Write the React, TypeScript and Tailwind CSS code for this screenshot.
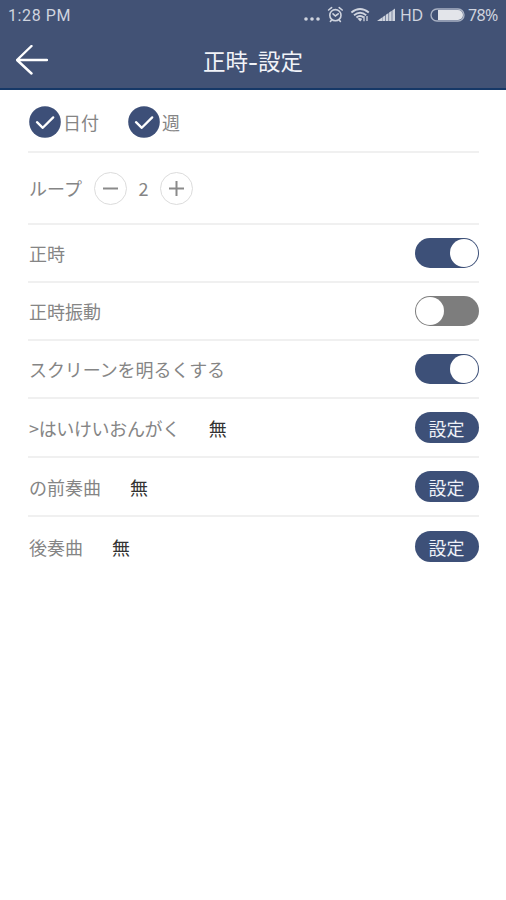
import { useState } from "react";
import type { ReactNode } from "react";
import clsx from "clsx";

/** Rows that carry an on/off switch. */
const SWITCHES = [
  { id: "hour", label: "正時", on: true },
  { id: "vibrate", label: "正時振動", on: false },
  { id: "screen", label: "スクリーンを明るくする", on: true },
];

const SOUNDS = [
  { id: "bgm", label: ">はいけいおんがく", value: "無" },
  { id: "prelude", label: "の前奏曲", value: "無" },
  { id: "postlude", label: "後奏曲", value: "無" },
];

function StatusBar() {
  return (
    <div className="flex h-[30px] items-center pl-2 pr-[7px] text-[#cfd4df]">
      <span className="mt-0.5 font-['Roboto',sans-serif] text-base leading-none tracking-[0.6px]">1:28 PM</span>
      <svg width="98" height="20" viewBox="0 0 98 20" className="ml-auto shrink-0" fill="none" stroke="currentColor">
        {/* more */}
        <g fill="currentColor" stroke="none">
          <circle cx="6" cy="14" r="1.8" />
          <circle cx="12" cy="14" r="1.8" />
          <circle cx="18" cy="14" r="1.8" />
        </g>
        {/* alarm */}
        <g strokeWidth="1.6" strokeLinecap="round">
          <circle cx="35.4" cy="10.2" r="5.6" />
          <path d="M28.6 5l3-2.4M42.2 5l-3-2.4M33 8.8l2.4 2.2 2.8-2.2M31.4 15.2l-1 1.2M39.4 15.2l1 1.2" />
        </g>
        {/* wifi */}
        <g strokeWidth="1.9">
          <path d="M51.4 7.6q8.6-7 17.4 0" />
          <path d="M54 10.2q6.1-5 12.2 0" />
          <path d="M56.4 12.6q3.7-3 7.4 0" />
          <path d="M57.4 13.6l2.8 2.8 1.6-1.6v-1.2q-2.2-1.4-4.4 0z" fill="currentColor" stroke="none" />
          <path d="M64 16.2v-5M67 11v5" strokeWidth="1.3" />
        </g>
        {/* signal */}
        <path
          d="M77 16l5.4-3.8V16zM82.7 12l2.6-1.8V16h-2.6zM85.9 9.8l2.6-1.8V16h-2.6zM89.1 7.6l2.6-1.8V16h-2.6zM92.3 5.4l2.7-1.9V16h-2.7z"
          fill="currentColor"
          stroke="none"
        />
      </svg>
      <span className="ml-[2px] w-[25px] whitespace-nowrap font-['Noto_Sans',sans-serif] text-base leading-none tracking-[-0.4px]">HD</span>
      {/* battery */}
      <svg width="35" height="14" viewBox="0 0 35 14" className="ml-[5px] shrink-0" fill="none">
        <rect x="1" y="1" width="33" height="12" rx="6" stroke="#a9b1c3" strokeWidth="1.4" />
        <path d="M8 2h20a5 5 0 0 1 0 10H8z" fill="#e3e5ea" />
      </svg>
      <span className="ml-[3px] w-[31px] whitespace-nowrap font-['Noto_Sans',sans-serif] text-base leading-none tracking-[-0.7px]">78%</span>
    </div>
  );
}

function BackArrow() {
  return (
    <svg width="32" height="30" viewBox="0 0 32 30" fill="none" stroke="#fff" strokeWidth="2.4" strokeLinecap="round" strokeLinejoin="round">
      <path d="M31 15H1M15.5 1L1 15l14.5 13.5" />
    </svg>
  );
}

function Row({ className, children }: { className?: string; children: ReactNode }) {
  return <div className={clsx("flex items-center border-[#f0f0f0] pl-px", className)}>{children}</div>;
}

function Check({ label }: { label: string }) {
  return (
    <label className="flex items-center">
      <svg width="32" height="32" viewBox="0 0 32 32" fill="none">
        <circle cx="16" cy="16" r="15.8" fill="#3d4f78" />
        <path d="M8 16.2l5.8 5.6 10.4-10.4" stroke="#fff" strokeWidth="2.3" strokeLinecap="round" strokeLinejoin="round" />
      </svg>
      <span className="ml-0.5">{label}</span>
    </label>
  );
}

function StepButton({ plus, onClick }: { plus?: boolean; onClick: () => void }) {
  return (
    <button onClick={onClick} className="size-[33px] rounded-full border border-[#dcdcdc]">
      <svg viewBox="0 0 31 31" fill="none" stroke="#8a8a8a" strokeWidth="2">
        <path d={plus ? "M8 15.5h15M15.5 8v15" : "M8 15.5h15"} />
      </svg>
    </button>
  );
}

function Toggle({ on, onClick }: { on: boolean; onClick: () => void }) {
  return (
    <button
      onClick={onClick}
      className={clsx(
        "ml-auto flex h-[30px] w-[64px] items-center rounded-full px-px",
        on ? "justify-end bg-[#3d5078]" : "justify-start bg-[#7d7d7d]"
      )}
    >
      <span className="size-7 rounded-full bg-white" />
    </button>
  );
}

export default function App() {
  const [loop, setLoop] = useState(2);
  const [switches, setSwitches] = useState(SWITCHES);

  const toggle = (id: string) => setSwitches(switches.map((s) => (s.id === id ? { ...s, on: !s.on } : s)));

  return (
    <div className="min-h-screen bg-white font-['Noto_Sans_CJK_JP',sans-serif] text-lg leading-none text-[#858585]">
      <header className="h-[90px] border-b-2 border-[#163867] bg-[#425275]">
        <StatusBar />
        <div className="grid h-[60px] grid-cols-[32px_1fr_32px] items-center px-4">
          <BackArrow />
          <h1 className="flex items-center justify-center text-[22.5px] text-[#f1f3f8]">
            正時<span className="inline-block scale-x-125 px-px font-medium">-</span>設定
          </h1>
        </div>
      </header>

      <main className="pl-7 pr-[27px]">
        <Row className="h-[63px] gap-[29px] border-b-2 pt-0.5">
          <Check label="日付" />
          <Check label="週" />
        </Row>
        <Row className="h-[72px] border-b-2">
          <span className="mr-3">ループ</span>
          <StepButton onClick={() => setLoop(Math.max(0, loop - 1))} />
          <span className="w-[33px] text-center">{loop}</span>
          <StepButton plus onClick={() => setLoop(loop + 1)} />
        </Row>
        {switches.map((s) => (
          <Row key={s.id} className="h-[58px] border-b-2">
            <span className={clsx(s.id === "screen" && "tracking-[-0.1px]")}>{s.label}</span>
            <Toggle on={s.on} onClick={() => toggle(s.id)} />
          </Row>
        ))}
        {SOUNDS.map((s) => (
          <Row key={s.id} className="h-[59px] border-b-2 last:border-b-0">
            <span className={clsx(s.id === "bgm" && "tracking-[-0.35px]")}>{s.label}</span>
            <span className="ml-[29px] text-[#333]">{s.value}</span>
            <button className="ml-auto h-[31px] w-[64px] rounded-full bg-[#3d5078] pr-px text-[#eef1f7]">設定</button>
          </Row>
        ))}
      </main>
    </div>
  );
}
